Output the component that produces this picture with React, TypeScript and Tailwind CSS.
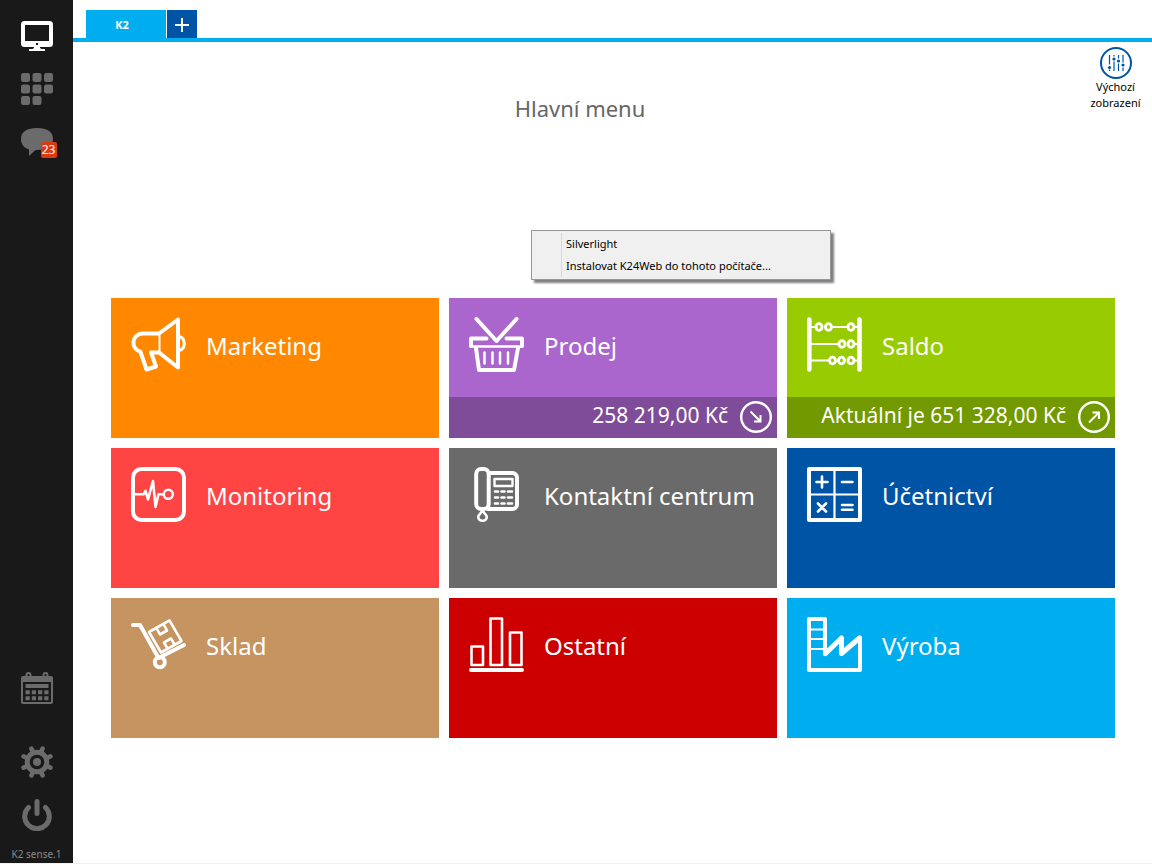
import type { ReactNode } from "react";

function TileIcon({ children }: { children: ReactNode }) {
  return (
    <svg
      viewBox="0 0 55 55"
      className="h-[55px] w-[55px] shrink-0"
      fill="none"
      stroke="currentColor"
      strokeWidth="4"
      strokeLinecap="round"
      strokeLinejoin="round"
      aria-hidden="true"
    >
      {children}
    </svg>
  );
}

const MarketingIcon = () => (
  <TileIcon>
    <path d="M27 16.500H11a9.300 9.300 0 0 0-1.500 18.300L15.500 52.500l9.500-3-5-14h7" />
    <path d="M28 16.500 47 2.500v48L28 35.500" />
    <path d="M28.500 17v18" strokeWidth="2" />
    <path d="M48 19.500c7 1.500 7 12.500 0 14" strokeWidth="3" />
  </TileIcon>
);

const BasketIcon = () => (
  <TileIcon>
    <path d="M7.500 2 27.500 24 47.500 2" />
    <path d="M17.500 21.500H2V29M37.500 21.500H53V29" />
    <path d="M2 29.500h51" strokeWidth="2.500" />
    <path d="M7 31l3 22h35l4-22" />
    <path d="M15.500 35.500v11M23.500 35.500v11M31 35.500v11M39 35.500v11" strokeWidth="2.500" />
  </TileIcon>
);

const beads = [
  [12, 10],
  [21.5, 10],
  [44, 10],
  [35, 27],
  [44, 27],
  [25.5, 43.5],
  [34.5, 43.5],
  [44, 43.5],
];

const AbacusIcon = () => (
  <TileIcon>
    <path d="M2.300 2.500v50M52.500 2.500v50" strokeWidth="4.600" />
    <path d="M4 10h4M25 10h15M48 10h4M4 27h27M48 27h4M4 43.500h17M48 43.500h4" strokeWidth="2" />
    {beads.map(([x, y]) => (
      <ellipse key={`${x}-${y}`} cx={x} cy={y} rx="3" ry="3.400" strokeWidth="2.900" />
    ))}
  </TileIcon>
);

const MonitoringIcon = () => (
  <TileIcon>
    <rect x="2" y="2" width="51" height="51" rx="8.500" />
    <path d="M4.500 27.300h8l2-3.500L17 32.500 22 14l2.500 26 3-12.700h5" strokeWidth="2.600" />
    <circle cx="37.300" cy="27.300" r="4.500" strokeWidth="2.600" />
  </TileIcon>
);

const PhoneIcon = () => (
  <TileIcon>
    <rect x="7.200" y="2" width="12.500" height="40" rx="5" />
    <path d="M21 6h22.500a4.500 4.500 0 0 1 4.500 4.500v27a4.500 4.500 0 0 1-4.500 4.500H19" />
    <rect x="25.500" y="12" width="18" height="7" strokeWidth="2.400" />
    <path
      d="M26 24.500h3M32.500 24.500h3M39 24.500h4M26 30.500h3M32.500 30.500h3M39 30.500h4M26 36.500h3M32.500 36.500h3M39 36.500h4"
      strokeWidth="2.600"
    />
    <path d="M13.500 43c-.5 3-4.300 4.500-4.300 7a4.300 3.800 0 0 0 8.600 0c0-2.500-3.800-4-4.300-7z" strokeWidth="2.600" />
  </TileIcon>
);

const CalculatorIcon = () => (
  <TileIcon>
    <rect x="2" y="2" width="51" height="51" />
    <path d="M27.500 3v49M3 27.500h49" strokeWidth="2.200" />
    <path d="M9.500 15h11M15 9.500v11M35 15h10.500M11 36.500l8 8M19 36.500l-8 8M35 38h10.500M35 42.800h10.500" strokeWidth="2.600" />
  </TileIcon>
);

const TrolleyIcon = () => (
  <TileIcon>
    <path d="M2 8h7l18.500 33L53 28" />
    <circle cx="28.800" cy="45.300" r="5" />
    <path d="M18 15 38.500 3.300 50.500 24 30 35.500z" strokeWidth="2.600" />
    <path d="M25.500 11l3.500 6.500 7-4L32.500 7M36.500 31.500 33 25.500l7-4 3.500 6" strokeWidth="2.600" />
  </TileIcon>
);

const BarsIcon = () => (
  <TileIcon>
    <path d="M2.500 29.500h11.500v18.500H2.500zM21.500 1.500h11.500v46.500H21.500zM41 15.500h11.500v32.500H41z" strokeWidth="2.600" />
    <path d="M2 53h51" />
  </TileIcon>
);

const FactoryIcon = () => (
  <TileIcon>
    <path d="M18 37V2H2v51h51V21" />
    <path d="M18.500 36.500 34.500 21v15.500L52.500 21" strokeWidth="5" />
    <path d="M3 12.500h14M3 22h14M3 32h14" strokeWidth="2.200" />
  </TileIcon>
);

const tiles = [
  { title: "Marketing", color: "bg-[#ff8800]", icon: MarketingIcon },
  { title: "Prodej", color: "bg-[#aa66cc]", icon: BasketIcon, value: "258 219,00 Kč", trend: "down" },
  { title: "Saldo", color: "bg-[#99cc00]", icon: AbacusIcon, value: "Aktuální je 651 328,00 Kč", trend: "up" },
  { title: "Monitoring", color: "bg-[#ff4444]", icon: MonitoringIcon },
  { title: "Kontaktní centrum", color: "bg-[#6a6a6a]", icon: PhoneIcon },
  { title: "Účetnictví", color: "bg-[#0054a6]", icon: CalculatorIcon },
  { title: "Sklad", color: "bg-[#c69460]", icon: TrolleyIcon },
  { title: "Ostatní", color: "bg-[#cc0000]", icon: BarsIcon },
  { title: "Výroba", color: "bg-[#00aeef]", icon: FactoryIcon },
];

function TrendIcon({ trend }: { trend?: string }) {
  return (
    <svg viewBox="0 0 32 32" className="h-8 w-8" fill="none" stroke="currentColor" strokeWidth="2.400" aria-hidden="true">
      <circle cx="16" cy="16" r="14.800" />
      <path d={trend === "up" ? "M11 21.500 21 11.500M14.500 11.500h6.500v6.500" : "M10.500 10.500 20.500 20.500M20.500 14v6.500H14"} strokeWidth="2" />
    </svg>
  );
}

function Sidebar() {
  return (
    <nav className="flex w-[73px] shrink-0 flex-col items-center bg-[#191919] pt-5 text-[#6b6b6b]">
      <button type="button" aria-label="Plocha" className="text-white">
        <svg viewBox="0 0 32 32" className="h-8 w-8" fill="currentColor" aria-hidden="true">
          <path
            fillRule="evenodd"
            d="M3.500 1h25A3.500 3.500 0 0 1 32 4.500v19a3.500 3.500 0 0 1-3.500 3.500h-25A3.500 3.500 0 0 1 0 23.500v-19A3.500 3.500 0 0 1 3.500 1zM4 5v16h24V5zM15 23v2h2v-2z"
          />
          <path d="M13 27h6v1l1.500 1H24v2H8v-2h3.500l1.500-1z" />
        </svg>
      </button>
      <button type="button" aria-label="Moduly" className="mt-[21px]">
        <svg viewBox="0 0 32 32" className="h-8 w-8" fill="currentColor" aria-hidden="true">
          {[0, 1, 2, 3, 4, 5, 6, 7].map((i) => (
            <rect key={i} x={(i % 3) * 11.5} y={Math.floor(i / 3) * 11.5} width="9" height="9" rx="2.200" />
          ))}
        </svg>
      </button>
      <button type="button" aria-label="Zprávy" className="relative mt-[23px]">
        <svg viewBox="0 0 32 32" className="h-8 w-8" fill="currentColor" aria-hidden="true">
          <path d="M16 0c10 0 16 3.500 16 11s-6 11-16 11h-1.500L8 28v-6.500C3 20 0 16.500 0 11 0 3.500 6 0 16 0z" />
        </svg>
        <span className="absolute top-3.5 -right-1 flex h-4 w-4 items-center justify-center rounded-xs bg-[#dc3a10] text-xs text-white">
          23
        </span>
      </button>
      <button type="button" aria-label="Kalendář" className="mt-auto">
        <svg viewBox="0 0 32 32" className="h-8 w-8" fill="none" stroke="currentColor" strokeWidth="2" aria-hidden="true">
          <rect x="1" y="5" width="30" height="26" rx="1" />
          <path d="M1 7.500h30" strokeWidth="5" />
          <path d="M5.500 7V3a2 2 0 0 1 4 0v4M22.500 7V3a2 2 0 0 1 4 0v4" />
          <path d="M4.500 14h23" strokeWidth="4" />
          <path d="M4.500 20.200h23M4.500 26.200h23" strokeWidth="4" strokeDasharray="4.300 1.950" />
        </svg>
      </button>
      <button type="button" aria-label="Nastavení" className="mt-[42px]">
        <svg viewBox="0 0 32 32" className="h-8 w-8" fill="none" stroke="currentColor" aria-hidden="true">
          <circle cx="16" cy="16" r="9.800" strokeWidth="5" />
          <circle cx="16" cy="16" r="4" fill="currentColor" stroke="none" />
          {[22.5, 67.5, 112.5, 157.5, 202.5, 247.5, 292.5, 337.5].map((a) => (
            <path key={a} d="M16 5V1.500" strokeWidth="4.600" strokeLinecap="round" transform={`rotate(${a} 16 16)`} />
          ))}
        </svg>
      </button>
      <button type="button" aria-label="Odhlásit" className="mt-[21px]">
        <svg
          viewBox="0 0 32 32"
          className="h-8 w-8"
          fill="none"
          stroke="currentColor"
          strokeWidth="5"
          strokeLinecap="round"
          aria-hidden="true"
        >
          <path d="M7.500 8.500a12.300 12.300 0 1 0 17 0M16 2.500v12" />
        </svg>
      </button>
      <span className="mt-[15px] pb-px text-[10px] leading-4 text-[#8a8a8a]">K2 sense.1</span>
    </nav>
  );
}

function ContextMenu() {
  return (
    <div
      role="menu"
      className="absolute top-[230px] left-[458px] w-[300px] border border-[#979797] bg-[#f0f0f0] py-0.5 pl-[29px] shadow-[3px_3px_2px_#808080]"
    >
      <div className="flex flex-col border-l border-[#d8d8d8] text-[11px] text-black">
        <button type="button" role="menuitem" className="h-[22px] pl-1 text-left">
          Silverlight
        </button>
        <button type="button" role="menuitem" className="h-[22px] pl-1 text-left">
          Instalovat K24Web do tohoto počítače...
        </button>
      </div>
    </div>
  );
}

export default function App() {
  return (
    <div className="flex min-h-screen border-b border-[#f0f0f0] bg-white font-['Noto_Sans','Open_Sans',sans-serif]">
      <Sidebar />
      <div className="relative flex min-w-0 flex-1 flex-col">
        <div className="flex gap-px border-b-4 border-[#00aeef] pt-2.5 pl-[13px]">
          <button type="button" className="h-7 w-20 bg-[#00aeef] pt-0.5 pr-2 text-[11px] font-bold text-white">
            K2
          </button>
          <button type="button" aria-label="Nová záložka" className="flex h-7 w-[30px] items-center justify-center bg-[#0054a6] pt-0.5 text-white">
            <svg viewBox="0 0 14 14" className="h-3.5 w-3.5" stroke="currentColor" strokeWidth="2" aria-hidden="true">
              <path d="M7 0v14M0 7h14" />
            </svg>
          </button>
        </div>

        <header className="flex h-64 items-start">
          <h1 className="flex-1 pt-[50px] pl-2 text-center text-[22px] leading-8 text-[#666666]">Hlavní menu</h1>
          <button type="button" className="flex w-[73px] flex-col items-center pt-[5px] text-[11px] leading-4 text-black">
            <svg viewBox="0 0 32 32" className="h-8 w-8" fill="none" stroke="#0054a6" aria-hidden="true">
              <circle cx="16" cy="16" r="15" strokeWidth="2" />
              <path d="M9.500 8v16M14 8v16M18.500 8v16M23 8v16" strokeWidth="1.200" />
              <path d="M9.500 17.500v5M14 9.500v5M18.500 11.500v5M23 15.500v5" stroke="#fff" strokeWidth="3" />
              <g fill="#0054a6" stroke="none">
                <circle cx="9.500" cy="20.500" r="1.600" />
                <circle cx="14" cy="12" r="1.600" />
                <circle cx="18.500" cy="14" r="1.600" />
                <circle cx="23" cy="18" r="1.600" />
              </g>
            </svg>
            <span>Výchozí zobrazení</span>
          </button>
        </header>

        <main className="grid grid-cols-3 gap-2.5 pr-[37px] pb-10 pl-[38px]">
          {tiles.map((t) => (
            <button key={t.title} type="button" className={`flex h-[140px] flex-col justify-between text-white ${t.color}`}>
              <span className="flex items-center gap-5 pt-[19px] pl-5">
                <t.icon />
                <span className="pt-0.5 text-2xl whitespace-nowrap">{t.title}</span>
              </span>
              {t.value && (
                <span className="flex h-[41px] w-full items-start justify-end gap-3 bg-black/25 pt-1 pr-[5px]">
                  <span className="text-[21px] leading-7 whitespace-nowrap">{t.value}</span>
                  <TrendIcon trend={t.trend} />
                </span>
              )}
            </button>
          ))}
        </main>

        <ContextMenu />
      </div>
    </div>
  );
}
